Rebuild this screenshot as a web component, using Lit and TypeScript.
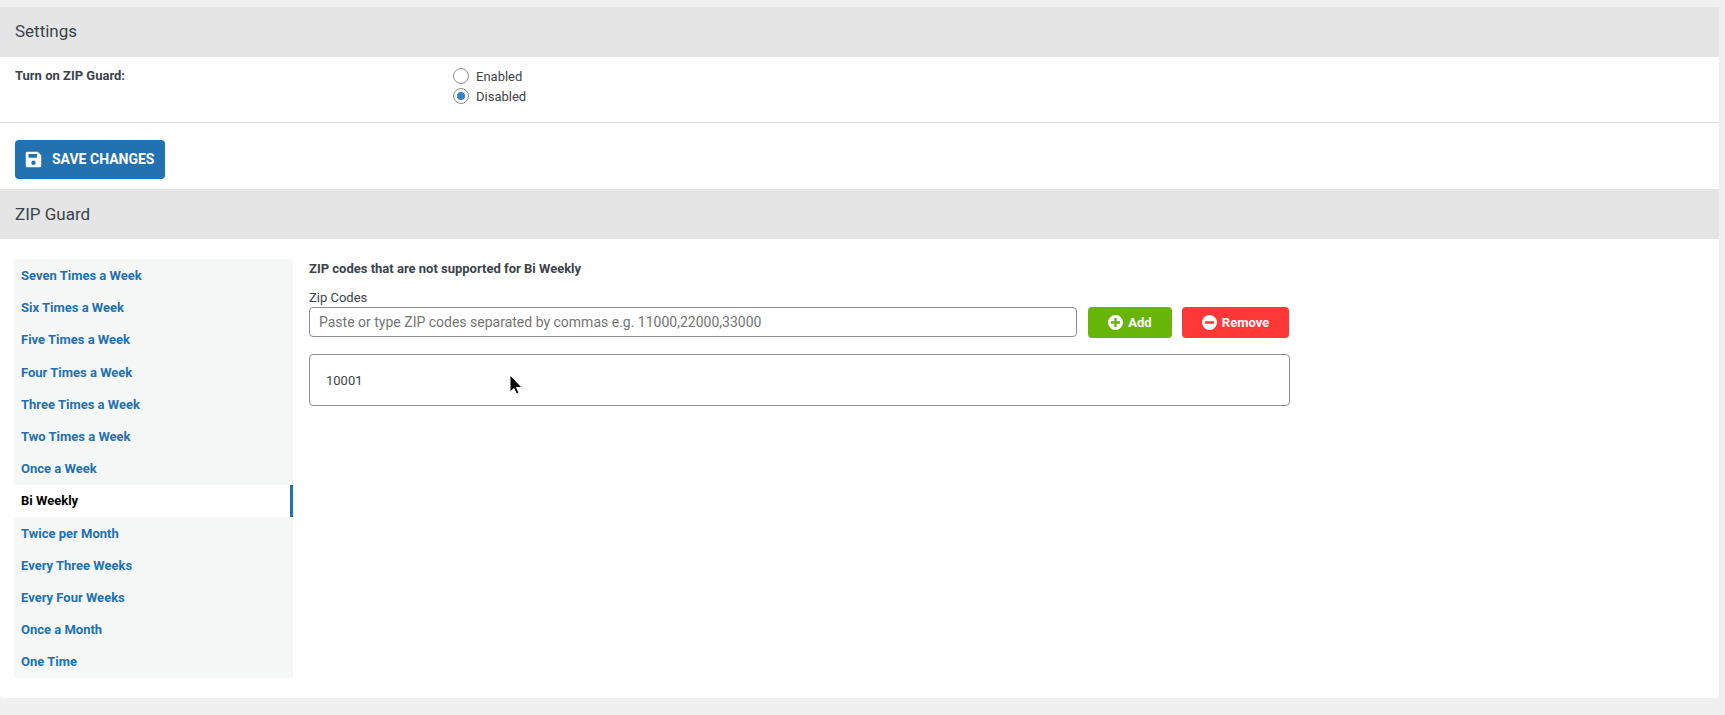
import { LitElement, html, css } from "lit";
import { customElement } from "lit/decorators.js";

const ITEMS = ["Seven Times a Week","Six Times a Week","Five Times a Week","Four Times a Week","Three Times a Week","Two Times a Week","Once a Week","Bi Weekly","Twice per Month","Every Three Weeks","Every Four Weeks","Once a Month","One Time"];

@customElement("app-root")
export class AppRoot extends LitElement {
  static styles = css`
    :host { display: block; height: 715px; background: #f0f0f1; padding: 7px 6px 0 0; box-sizing: border-box; font-family: Roboto, "Liberation Sans", sans-serif; font-size: 13px; color: #3c434a; position: relative; overflow: hidden; }
    * { box-sizing: border-box; }
    .panel { height: 691px; background: #fff; border-radius: 0 0 4px 4px; }
    .head { height: 50px; background: #e5e5e5; padding: 0 15px; font-size: 17px; line-height: 50px; }
    .head.first { line-height: 48px; }
    .setting { height: 66px; border-bottom: 1px solid #dcdcde; display: flex; padding: 10px 15px 0; }
    .setting .label { width: 438px; font-weight: 700; font-size: 13px; line-height: 18px; }
    .radios { display: flex; flex-direction: column; margin-top: -1px; padding-top: 1px; }
    .radio { display: flex; align-items: center; height: 20px; gap: 7px; line-height: 20px; }
    .dot { width: 16px; height: 16px; margin-top: -2px; border-radius: 50%; border: 1px solid #8c8f94; background: #fff; display: flex; align-items: center; justify-content: center; }
    .dot.on::after { content: ""; width: 8px; height: 8px; border-radius: 50%; background: #3582c4; }
    .save-row { padding: 17px 15px 0; height: 66px; }
    .btn { display: inline-flex; align-items: center; border-radius: 4px; color: #fff; font-weight: 700; }
    .save { width: 150px; height: 39px; background: #2271b1; font-size: 14px; line-height: 37px; padding: 0 0 0 10px; gap: 10px; }
    .body { display: flex; padding: 20px 14px 0; gap: 17px; }
    .side { width: 279px; height: 419px; background: #f6f7f7; flex: none; }
    .item { display: block; height: 32.23px; line-height: 33.1px; padding-left: 7px; font-weight: 700; color: #2271b1; font-size: 13px; }
    .item:last-child { line-height: 32.7px; }
    .item.active { background: #fff; color: #000; border-right: 3px solid #2271b1; line-height: 32.7px; }
    .main { width: 981px; margin-left: -1px; }
    .title { font-weight: 700; font-size: 13px; line-height: 20px; margin-bottom: 11px; }
    .cap { line-height: 16px; font-size: 13px; height: 17px; }
    .row { display: flex; align-items: flex-start; }
    .input { width: 768px; height: 30px; border: 1px solid #8c8f94; border-radius: 4px; padding: 0 9px; font-size: 14px; line-height: 28px; color: #757575; }
    .add { width: 84px; height: 31px; background: #68b50a; margin-left: 11px; justify-content: center; gap: 5px; font-size: 13px; }
    .rem { width: 107px; height: 31px; background: #ff3737; margin-left: 10px; justify-content: center; gap: 5px; font-size: 13px; }
    .box { width: 981px; height: 52px; margin-top: 16px; border: 1px solid #8c8f94; border-radius: 4px; padding-left: 16px; line-height: 52px; font-size: 13px; }
    .cursor { position: absolute; left: 509px; top: 374px; }
    svg { display: block; flex: none; }
  `;

  render() {
    return html`
      <div class="panel">
        <div class="head first">Settings</div>
        <div class="setting">
          <div class="label">Turn on ZIP Guard:</div>
          <div class="radios">
            <div class="radio"><span class="dot"></span>Enabled</div>
            <div class="radio"><span class="dot on"></span>Disabled</div>
          </div>
        </div>
        <div class="save-row">
          <div class="btn save">
            <svg width="17" height="17" viewBox="0 0 16 16"><path fill="#fff" fill-rule="evenodd" d="M2.5 .7h9.5L15.3 4v9.8a1.5 1.5 0 0 1-1.5 1.5H2.2A1.5 1.5 0 0 1 .7 13.8V2.2A1.5 1.5 0 0 1 2.5 .7zM3.3 2.8v3.6h8V2.8zM8 9a2.1 2.1 0 1 0 0 4.2A2.1 2.1 0 0 0 8 9z"/></svg>
            SAVE CHANGES
          </div>
        </div>
        <div class="head">ZIP Guard</div>
        <div class="body">
          <div class="side">
            ${ITEMS.map((i) => html`<div class="item ${i === "Bi Weekly" ? "active" : ""}">${i}</div>`)}
          </div>
          <div class="main">
            <div class="title">ZIP codes that are not supported for Bi Weekly</div>
            <div class="cap">Zip Codes</div>
            <div class="row">
              <div class="input">Paste or type ZIP codes separated by commas e.g. 11000,22000,33000</div>
              <div class="btn add">
                <svg width="15" height="15" viewBox="0 0 15 15"><path fill="#fff" fill-rule="evenodd" d="M7.5 0a7.5 7.5 0 1 1 0 15 7.5 7.5 0 0 1 0-15zM6.3 3v3.3H3v2.4h3.3V12h2.4V8.7H12V6.3H8.7V3z"/></svg>
                Add
              </div>
              <div class="btn rem">
                <svg width="15" height="15" viewBox="0 0 15 15"><path fill="#fff" fill-rule="evenodd" d="M7.5 0a7.5 7.5 0 1 1 0 15 7.5 7.5 0 0 1 0-15zM3 6.3v2.4h9V6.3z"/></svg>
                Remove
              </div>
            </div>
            <div class="box">10001</div>
          </div>
        </div>
      </div>
      <svg class="cursor" width="14" height="21" viewBox="0 0 14 21"><path d="M1 1v17l4-3.5 2.5 5.5 2.5-1-2.5-5.5H13z" fill="#000" stroke="#fff" stroke-width="1"/></svg>
    `;
  }
}
